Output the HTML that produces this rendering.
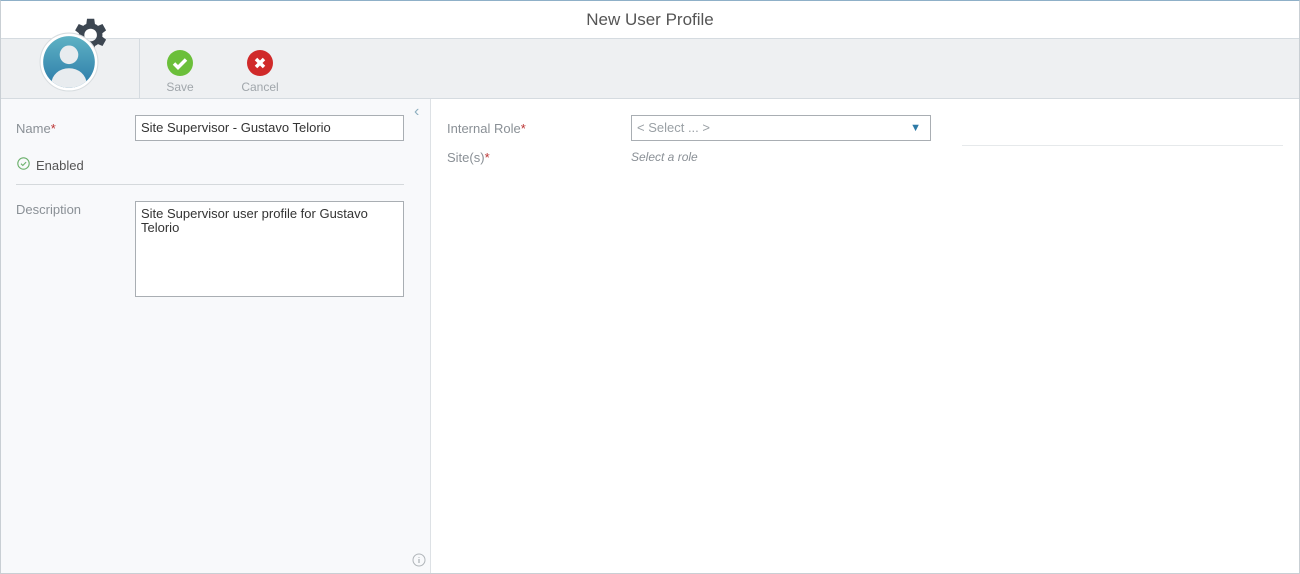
<!DOCTYPE html>
<html><head><style>
*{box-sizing:border-box;margin:0;padding:0}
body{width:1300px;height:574px;overflow:hidden;background:#fff;font-family:"Liberation Sans",sans-serif;position:relative}
.frame{position:absolute;left:0;top:0;width:1300px;height:574px;border:1px solid #c9cfd4;border-top:1px solid #8fb0c8;pointer-events:none;z-index:5}
.title{position:absolute;left:0;top:0;width:1300px;height:39px;text-align:center;line-height:39px;font-size:17px;color:#555;background:#fff}
.tool{position:absolute;left:0;top:38px;width:1300px;height:61px;background:#eef0f2;border-top:1px solid #d5dbe0;border-bottom:1px solid #d5dbe0}
.sep{position:absolute;left:139px;top:0;width:1px;height:59px;background:#d5dbe0}
.btn{position:absolute;font-size:12px;color:#a0a6ab;text-align:center;width:50px}
.left{position:absolute;left:0;top:99px;width:431px;height:475px;background:#f8f9fb;border-right:1px solid #dde1e5}
.lbl{position:absolute;font-size:13px;color:#8a9096}
.req{color:#b33}
.inp{position:absolute;border:1px solid #a9aeb3;background:#fff;font-size:13px;color:#333;padding:0 5px}
</style></head><body>
<div class="frame"></div>
<div class="title">New User Profile</div>
<div class="tool"><div class="sep"></div></div>
<svg style="position:absolute;left:70px;top:17px" width="38" height="36" viewBox="2 2 20 20"><path fill="#3c4651" d="M19.4 13a7.5 7.5 0 0 0 0-2l2.1-1.6-2-3.5-2.5 1a7 7 0 0 0-1.7-1L14.9 3h-4l-.4 2.9a7 7 0 0 0-1.7 1l-2.5-1-2 3.5L6.4 11a7.5 7.5 0 0 0 0 2l-2.1 1.6 2 3.5 2.5-1a7 7 0 0 0 1.7 1l.4 2.9h4l.4-2.9a7 7 0 0 0 1.7-1l2.5 1 2-3.5zM12.9 15.5a3.5 3.5 0 1 1 0-7 3.5 3.5 0 0 1 0 7z"/></svg>
<svg style="position:absolute;left:38px;top:32px" width="62" height="60" viewBox="0 0 60 58"><defs><linearGradient id="g" x1="0" y1="0" x2="0" y2="1"><stop offset="0" stop-color="#5fb2c4"/><stop offset="1" stop-color="#2a7aa8"/></linearGradient><clipPath id="c"><circle cx="30" cy="29" r="25"/></clipPath></defs><circle cx="30" cy="29" r="28" fill="#fff" stroke="#d8dde0"/><circle cx="30" cy="29" r="25" fill="url(#g)"/><g clip-path="url(#c)" fill="#e8ecef"><circle cx="30" cy="22" r="9"/><ellipse cx="30" cy="50" rx="17" ry="15"/></g></svg>
<svg style="position:absolute;left:167px;top:50px" width="26" height="26" viewBox="0 0 26 26"><circle cx="13" cy="13" r="13" fill="#6bbf3a"/><path d="M7 13.5l4 4 8-8" stroke="#fff" stroke-width="3.5" fill="none"/></svg>
<div class="btn" style="left:155px;top:80px">Save</div>
<svg style="position:absolute;left:247px;top:50px" width="26" height="26" viewBox="0 0 26 26"><circle cx="13" cy="13" r="13" fill="#d02a2a"/><path d="M9 9l8 8M17 9l-8 8" stroke="#fff" stroke-width="3.5"/></svg>
<div class="btn" style="left:235px;top:80px">Cancel</div>
<div class="left">
<div style="position:absolute;left:414px;top:4px;color:#8fb0c0;font-size:16px">&#8249;</div>
<div class="lbl" style="left:16px;top:22px">Name<span class="req">*</span></div>
<div class="inp" style="left:135px;top:16px;width:269px;height:26px;line-height:24px">Site Supervisor - Gustavo Telorio</div>
<svg style="position:absolute;left:17px;top:58px" width="13" height="13" viewBox="0 0 13 13"><circle cx="6.5" cy="6.5" r="5.7" fill="none" stroke="#6bb06b" stroke-width="1.1"/><path d="M4 6.7l1.8 1.8 3.3-3.4" fill="none" stroke="#6bb06b" stroke-width="1.1"/></svg>
<div class="lbl" style="left:36px;top:59px;color:#555">Enabled</div>
<div style="position:absolute;left:16px;top:85px;width:388px;height:1px;background:#d5d9dc"></div>
<div class="lbl" style="left:16px;top:103px">Description</div>
<div class="inp" style="left:135px;top:102px;width:269px;height:96px;padding-top:5px;line-height:14px">Site Supervisor user profile for Gustavo Telorio</div>
<svg style="position:absolute;left:412px;top:454px" width="14" height="14" viewBox="0 0 14 14"><circle cx="7" cy="7" r="6" fill="none" stroke="#b0b5b9"/><path d="M7 6v4M7 4v.8" stroke="#b0b5b9" stroke-width="1.3"/></svg>
</div>
<div class="lbl" style="left:447px;top:121px">Internal Role<span class="req">*</span></div>
<div class="inp" style="left:631px;top:115px;width:300px;height:26px;line-height:24px;color:#9aa0a5">&lt; Select ... &gt;<span style="position:absolute;right:9px;top:0;color:#2e7aa6;font-size:11px">&#9660;</span></div>
<div class="lbl" style="left:447px;top:150px">Site(s)<span class="req">*</span></div>
<div class="lbl" style="left:631px;top:150px;font-style:italic;font-size:12px">Select a role</div>
<div style="position:absolute;left:962px;top:145px;width:321px;height:1px;background:#e6e9eb"></div>
</body></html>
